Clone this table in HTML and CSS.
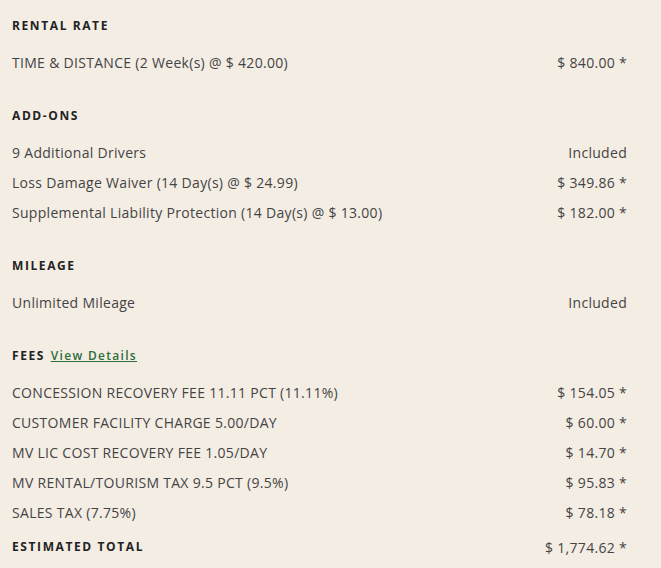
FILE: index.html
```html
<!DOCTYPE html>
<html>
<head>
    <meta charset="UTF-8">
    <meta name="viewport" content="width=device-width, initial-scale=1.0">
    <title>Rate Summary</title>
    <link rel="stylesheet" href="styles.css">
</head>
<body>
    <div class="summary">
        <div class="section">
            <h3>RENTAL RATE</h3>
            <div class="row"><span>TIME &amp; DISTANCE (2 Week(s) @ $ 420.00)</span><span>$ 840.00 *</span></div>
        </div>
        <div class="section">
            <h3>ADD-ONS</h3>
            <div class="row"><span>9 Additional Drivers</span><span>Included</span></div>
            <div class="row"><span>Loss Damage Waiver (14 Day(s) @ $ 24.99)</span><span>$ 349.86 *</span></div>
            <div class="row"><span>Supplemental Liability Protection (14 Day(s) @ $ 13.00)</span><span>$ 182.00 *</span></div>
        </div>
        <div class="section">
            <h3>MILEAGE</h3>
            <div class="row"><span>Unlimited Mileage</span><span>Included</span></div>
        </div>
        <div class="section">
            <h3>FEES <a href="#" class="details">View Details</a></h3>
            <div class="row"><span>CONCESSION RECOVERY FEE 11.11 PCT (11.11%)</span><span>$ 154.05 *</span></div>
            <div class="row"><span>CUSTOMER FACILITY CHARGE 5.00/DAY</span><span>$ 60.00 *</span></div>
            <div class="row"><span>MV LIC COST RECOVERY FEE 1.05/DAY</span><span>$ 14.70 *</span></div>
            <div class="row"><span>MV RENTAL/TOURISM TAX 9.5 PCT (9.5%)</span><span>$ 95.83 *</span></div>
            <div class="row"><span>SALES TAX (7.75%)</span><span>$ 78.18 *</span></div>
            <div class="row total"><h3>ESTIMATED TOTAL</h3><span>$ 1,774.62 *</span></div>
        </div>
    </div>
</body>
</html>
```

FILE: styles.css
```css
body { margin: 0; background: #f4ede4; font-family: "Open Sans", sans-serif; color: #444; }
.summary { padding: 16px 34px 0 12px; }
.section { margin-bottom: 28px; }
h3 { margin: 0 0 12px; font-size: 12px; font-weight: 700; line-height: 20px; letter-spacing: 1.6px; color: #222; }
.row { display: flex; justify-content: space-between; font-size: 14px; line-height: 30px; letter-spacing: 0.3px; }
.details { margin-left: 1px; color: #2c6e3c; font-weight: 600; letter-spacing: 1.3px; text-decoration: underline; }
.total { margin-top: 3px; align-items: baseline; }
.total h3 { margin: 0; }
.total span { position: relative; top: 2px; }
```
